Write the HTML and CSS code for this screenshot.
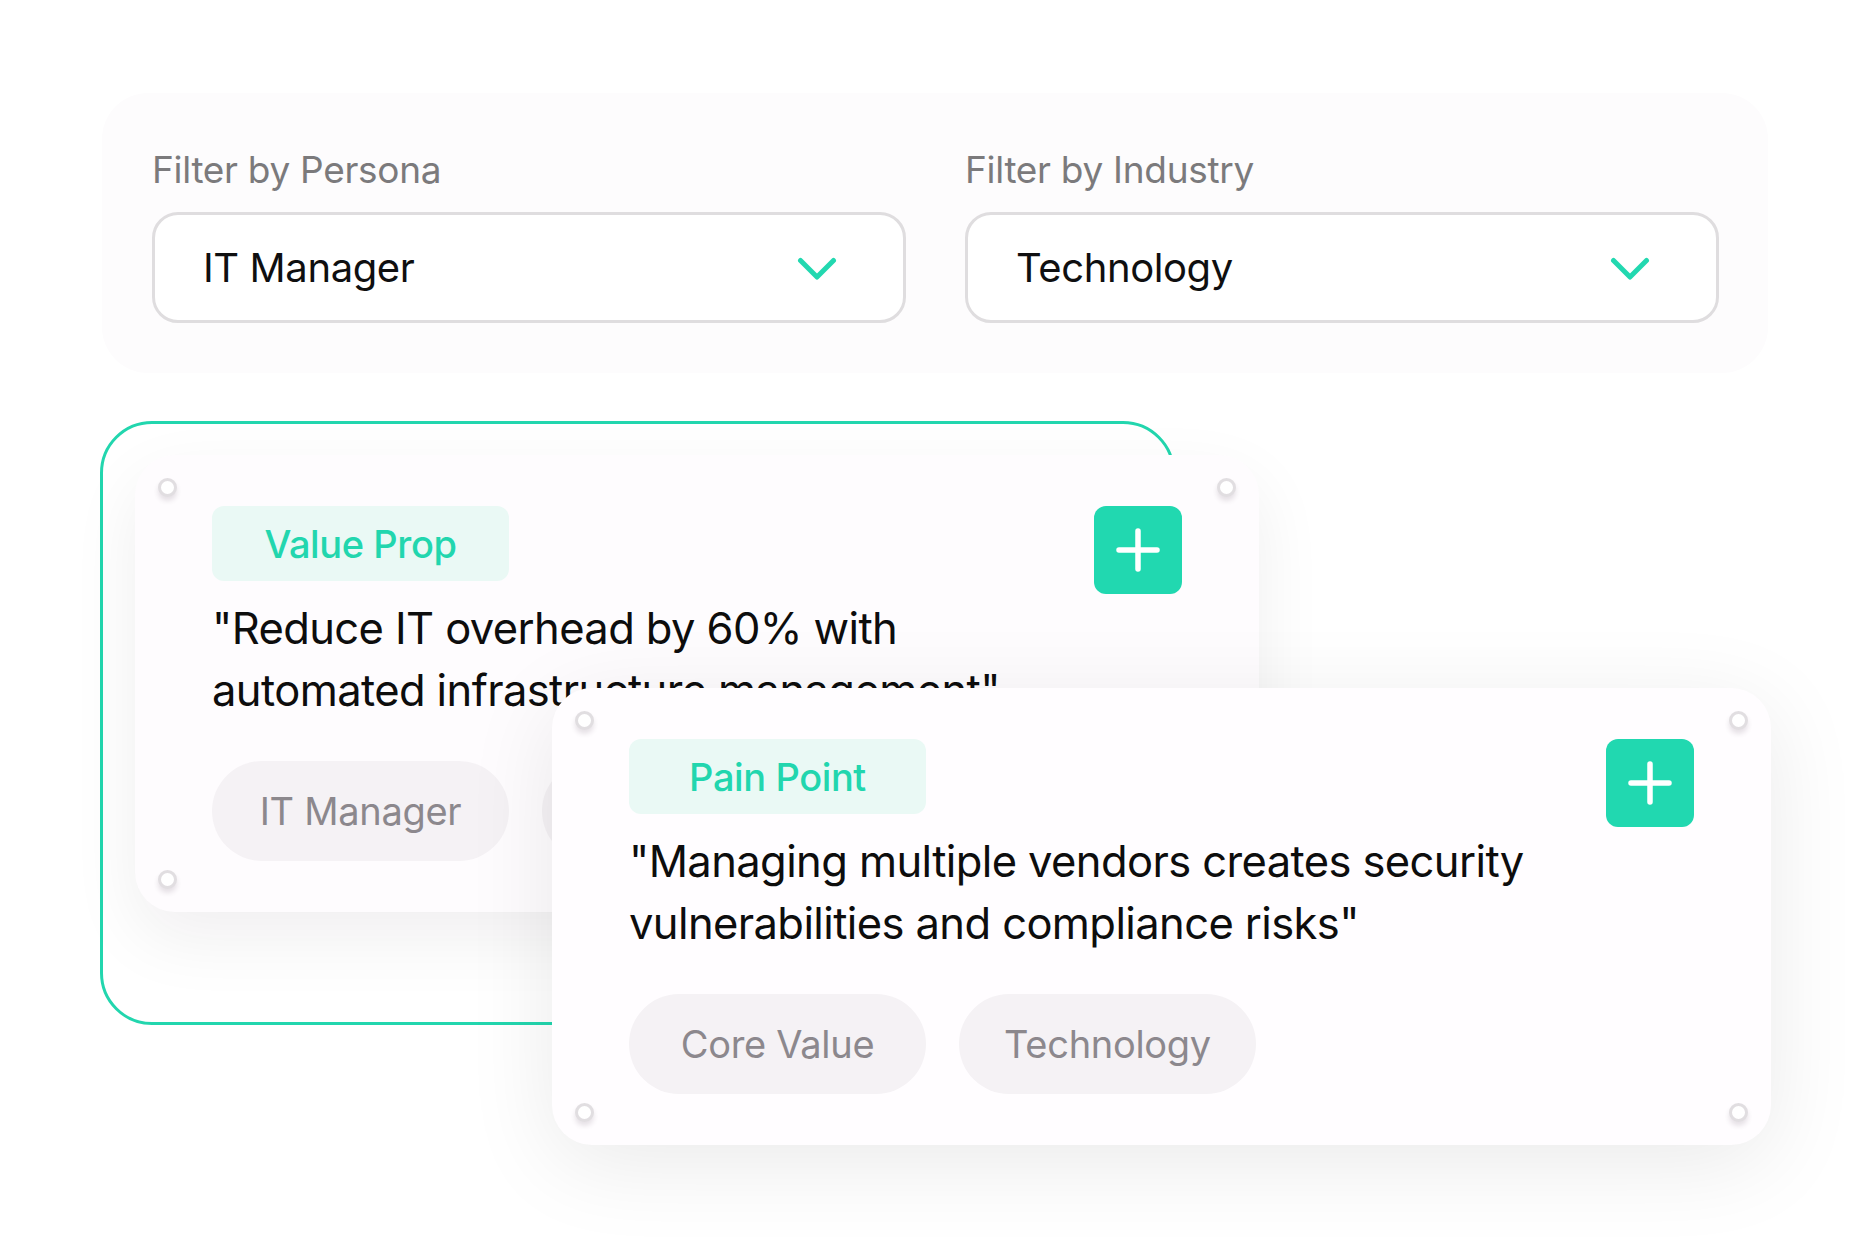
FILE: index.html
```html
<!DOCTYPE html>
<html lang="en">
<head>
<meta charset="utf-8">
<title>Message Library</title>
<link rel="stylesheet" href="styles.css">
</head>
<body>
<main class="stage">
  <section class="filters">
    <div class="filter">
      <div class="filter-label">Filter by Persona</div>
      <div class="select">
        <span class="select-value">IT Manager</span>
        <svg class="chev" width="40" height="24" viewBox="0 0 40 24"><path d="M3.5 3.5 L20 20 L36.5 3.5" fill="none" stroke="#22d8b0" stroke-width="5" stroke-linecap="round" stroke-linejoin="round"/></svg>
      </div>
    </div>
    <div class="filter">
      <div class="filter-label">Filter by Industry</div>
      <div class="select">
        <span class="select-value">Technology</span>
        <svg class="chev" width="40" height="24" viewBox="0 0 40 24"><path d="M3.5 3.5 L20 20 L36.5 3.5" fill="none" stroke="#22d8b0" stroke-width="5" stroke-linecap="round" stroke-linejoin="round"/></svg>
      </div>
    </div>
  </section>

  <section class="board">
    <div class="frame"></div>

    <article class="card card-back">
      <span class="dot dot-tl"></span><span class="dot dot-tr"></span><span class="dot dot-bl"></span><span class="dot dot-br"></span>
      <div class="card-head">
        <span class="badge">Value Prop</span>
        <span class="add"><svg width="44" height="44" viewBox="0 0 44 44"><path d="M22 3 V41 M3 22 H41" stroke="#fff" stroke-width="5.5" stroke-linecap="round"/></svg></span>
      </div>
      <p class="quote">"Reduce IT overhead by 60% with<br>automated infrastructure management"</p>
      <div class="tags">
        <span class="tag">IT Manager</span>
        <span class="tag">Technology</span>
      </div>
    </article>

    <article class="card card-front">
      <span class="dot dot-tl"></span><span class="dot dot-tr"></span><span class="dot dot-bl"></span><span class="dot dot-br"></span>
      <div class="card-head">
        <span class="badge">Pain Point</span>
        <span class="add"><svg width="44" height="44" viewBox="0 0 44 44"><path d="M22 3 V41 M3 22 H41" stroke="#fff" stroke-width="5.5" stroke-linecap="round"/></svg></span>
      </div>
      <p class="quote">"Managing multiple vendors creates security<br>vulnerabilities and compliance risks"</p>
      <div class="tags">
        <span class="tag">Core Value</span>
        <span class="tag">Technology</span>
      </div>
    </article>
  </section>
</main>
</body>
</html>
```

FILE: styles.css
```css
html, body {
  margin: 0;
  padding: 0;
  height: 100%;
  overflow: hidden;
  background: #ffffff;
}

body {
  font-family: "Inter", "Noto Sans", "Liberation Sans", sans-serif;
  color: #111111;
}

.stage {
  padding-top: 93px;
  display: flex;
  flex-direction: column;
}

/* ---------- filters panel ---------- */
.filters {
  margin-left: 102px;
  width: 1666px;
  box-sizing: border-box;
  padding: 54px 49px 50px 50px;
  display: grid;
  grid-template-columns: 754px 754px;
  column-gap: 59px;
  background: #fdfcfd;
  border-radius: 46px;
}

.filter {
  display: flex;
  flex-direction: column;
  gap: 20px;
}

.filter-label {
  font-size: 37px;
  line-height: 45px;
  color: #7b7a7c;
  letter-spacing: -0.3px;
}

.select {
  height: 111px;
  box-sizing: border-box;
  border: 3px solid #dfdddf;
  border-radius: 26px;
  background: #ffffff;
  padding: 0 66px 0 48px;
  display: flex;
  align-items: center;
  justify-content: space-between;
}

.select-value {
  font-size: 40px;
  color: #0f0f10;
  letter-spacing: -0.4px;
}

.chev {
  display: block;
  margin-top: 2px;
}

/* ---------- board of cards ---------- */
.board {
  position: relative;
  margin-top: 48px;
  margin-left: 100px;
  height: 760px;
}

.frame {
  position: absolute;
  left: 0;
  top: 0;
  width: 1075px;
  height: 604px;
  box-sizing: border-box;
  border: 3px solid #22d6ae;
  border-radius: 52px;
}

.card {
  position: absolute;
  box-sizing: border-box;
  height: 457px;
  padding: 51px 77px 51px 77px;
  border-radius: 40px;
  display: flex;
  flex-direction: column;
}

.card-back {
  left: 35px;
  top: 34px;
  width: 1124px;
  background: #fefcfe;
  box-shadow: 0 26px 70px rgba(30, 10, 30, 0.065);
}

.card-front {
  left: 452px;
  top: 267px;
  width: 1219px;
  background: #fffdff;
  box-shadow: 0 18px 90px rgba(0, 0, 0, 0.085);
}

.dot {
  position: absolute;
  width: 13px;
  height: 13px;
  border: 3px solid #e1dee1;
  border-radius: 50%;
  background: #ffffff;
  box-shadow: 0 4px 5px rgba(60, 40, 60, 0.13);
}
.dot-tl { left: 23px; top: 23px; }
.dot-tr { right: 23px; top: 23px; }
.dot-bl { left: 23px; bottom: 23px; }
.dot-br { right: 23px; bottom: 23px; }

.card-head {
  display: flex;
  justify-content: space-between;
  align-items: flex-start;
  height: 88px;
}

.badge {
  width: 297px;
  height: 75px;
  border-radius: 12px;
  background: #eaf9f5;
  color: #22d6ae;
  font-size: 38px;
  font-weight: 500;
  letter-spacing: -0.4px;
  display: flex;
  align-items: center;
  justify-content: center;
}

.add {
  width: 88px;
  height: 88px;
  border-radius: 12px;
  background: #21d8b0;
  display: flex;
  align-items: center;
  justify-content: center;
}
.add svg { display: block; }

.quote {
  margin: 3px 0 0 0;
  font-size: 43.5px;
  line-height: 62px;
  color: #0d0d0d;
  letter-spacing: -0.6px;
  white-space: nowrap;
}

.tags {
  margin-top: 40px;
  display: flex;
  gap: 33px;
}

.tag {
  width: 297px;
  height: 100px;
  border-radius: 50px;
  background: #f5f2f5;
  color: #8c888d;
  font-size: 38px;
  letter-spacing: -0.3px;
  display: flex;
  align-items: center;
  justify-content: center;
}
```
